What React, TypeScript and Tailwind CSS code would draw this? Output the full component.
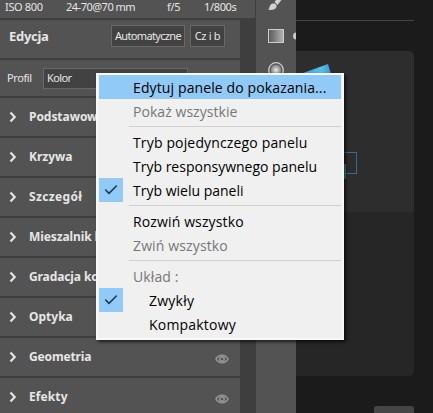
import { Check } from "lucide-react";
import clsx from "clsx";

const SECTIONS = [
  { label: "Podstawowe", spacing: "tracking-[-0.05px]" },
  { label: "Krzywa", spacing: "tracking-[0px]" },
  { label: "Szczegół", spacing: "tracking-[0.35px]" },
  { label: "Mieszalnik kolorów", spacing: "tracking-[-0.1px]" },
  { label: "Gradacja kolorów", spacing: "tracking-[-0.1px]" },
  { label: "Optyka", spacing: "tracking-[0px]" },
  { label: "Geometria", spacing: "tracking-[-0.15px]" },
  { label: "Efekty", spacing: "tracking-[0.1px]" },
];

interface MenuEntry {
  label: string;
  spacing?: string;
  active?: boolean;
  disabled?: boolean;
  checked?: boolean;
  indent?: boolean;
}

const MENU_GROUPS: MenuEntry[][] = [
  [
    { label: "Edytuj panele do pokazania...", active: true, spacing: "tracking-[0.12px]" },
    { label: "Pokaż wszystkie", disabled: true, spacing: "tracking-[0.05px]" },
  ],
  [
    { label: "Tryb pojedynczego panelu", spacing: "tracking-[0.15px]" },
    { label: "Tryb responsywnego panelu" },
    { label: "Tryb wielu paneli", checked: true },
  ],
  [
    { label: "Rozwiń wszystko", spacing: "tracking-[0.13px]" },
    { label: "Zwiń wszystko", disabled: true, spacing: "tracking-[0.13px]" },
  ],
  [
    { label: "Układ :", disabled: true, spacing: "tracking-[0.1px]" },
    { label: "Zwykły", checked: true, indent: true, spacing: "tracking-[0.25px]" },
    { label: "Kompaktowy", indent: true, spacing: "tracking-[0.2px]" },
  ],
];

function EyeIcon() {
  return (
    <svg width="14" height="10" viewBox="0 0 14 10" fill="none">
      <path d="M1 5C3.8.2 10.2.2 13 5 10.2 9.8 3.8 9.8 1 5Z" stroke="#929292" strokeWidth="1.6" />
      <circle cx="7" cy="5" r="2.2" stroke="#929292" strokeWidth="1.7" />
    </svg>
  );
}

function Sidebar() {
  return (
    <div className="flex w-64 shrink-0 flex-col bg-[#3e3e3e] text-[#e6e6e6]">
      <div className="flex h-[18px] w-[255px] shrink-0 bg-[#535353] pl-[5px] text-[11px] leading-[15px] tracking-[-0.35px] whitespace-nowrap">
        <span className="w-[61px] -translate-y-px">ISO 800</span>
        <span className="w-[101px] -translate-y-px tracking-[-0.5px]">24-70@70 mm</span>
        <span className="w-[37px] -translate-y-px">f/5</span>
        <span className="-translate-y-px">1/800s</span>
      </div>
      <div className="mt-0.5 flex h-[38px] w-60 shrink-0 items-start bg-[#535353] pl-[9px]">
        <span className="mt-[7px] w-[102px] text-[13px] leading-[18px] font-bold tracking-[-0.3px]">Edycja</span>
        <span className="mt-[5px] flex h-[22px] w-[74px] items-center justify-center border border-[#686868] bg-[#424242] text-[11px] tracking-[-0.65px]">
          Automatyczne
        </span>
        <span className="mt-[5px] ml-[5px] flex h-[22px] w-[35px] items-center justify-center border border-[#686868] bg-[#424242] text-[11px] tracking-[-0.3px]">
          Cz i b
        </span>
      </div>
      <div className="mt-0.5 flex h-9 w-60 shrink-0 items-start bg-[#535353] pl-[7px] text-[11px]">
        <span className="mt-[9px] w-9 leading-[18px] tracking-[-0.4px]">Profil</span>
        <span className="mt-2 flex h-[21px] w-[145px] items-center border border-[#686868] bg-[#424242] pl-[3px] tracking-[-0.6px]">
          Kolor
        </span>
      </div>
      {SECTIONS.map((s) => (
        <div key={s.label} className="mt-0.5 flex h-[38px] w-60 shrink-0 items-center bg-[#535353] pl-[9px]">
          <svg width="8" height="12" viewBox="0 0 8 12" fill="none">
            <path d="m1.5 1.5 4.2 4.5-4.2 4.5" stroke="#e2e2e2" strokeWidth="2.2" />
          </svg>
          <span className={clsx("ml-3 flex-1 text-[12px] font-bold whitespace-nowrap", s.spacing)}>{s.label}</span>
          <span className="mt-1 mr-[11px] flex">
            <EyeIcon />
          </span>
        </div>
      ))}
    </div>
  );
}

function Toolbar() {
  return (
    <div className="w-10 shrink-0 bg-[#535353]">
      <svg width="40" height="90" viewBox="0 0 40 90">
        <defs>
          <linearGradient id="fade">
            <stop stopColor="#585858" />
            <stop offset="1" stopColor="#b5b5b5" />
          </linearGradient>
          <radialGradient id="glow">
            <stop stopColor="#ededed" />
            <stop offset="1" stopColor="#777" />
          </radialGradient>
        </defs>
        <path d="M18.5 2 23-4l4 2-5.5 7Z" fill="#d2d2d2" />
        <path d="M17 3.5c3 0 4.5 2 3 4.5-1.500 2-5 2.500-8 1.500 2-1 1-5.500 5-6Z" fill="#d2d2d2" />
        <rect x="12.5" y="29.5" width="15" height="13" fill="url(#fade)" stroke="#cecece" />
        <path d="M40 32.5a3 3.5 0 0 0 0 7Z" fill="#c9c9c9" />
        <circle cx="20" cy="70" r="7.3" fill="#555" stroke="#cecece" strokeWidth="1.3" />
        <circle cx="20" cy="70" r="5.5" fill="url(#glow)" />
      </svg>
    </div>
  );
}

function Workspace() {
  return (
    <div className="flex flex-1 flex-col bg-[#1b1b1b]">
      <div className="mt-5 h-px w-[118px] shrink-0 bg-[#444]" />
      <div className="mt-[30px] h-[325px] w-[118px] shrink-0 overflow-hidden rounded-r-[5px] bg-[#262626]">
        <div className="h-[161px] bg-[#2d2d2d]">
          <svg width="118" height="161" viewBox="0 0 118 161">
            <defs>
              <linearGradient id="sky">
                <stop stopColor="#4699db" />
                <stop offset=".65" stopColor="#55c2dd" />
                <stop offset="1" stopColor="#438de0" />
              </linearGradient>
            </defs>
            <path d="m7 22 25-9 3 10H7Z" fill="url(#sky)" />
            <rect x="30.5" y="101.5" width="30" height="21" fill="none" stroke="#356b96" />
            <path d="M48 113h2v15h-2Z" fill="#439478" />
          </svg>
        </div>
      </div>
      <div className="mt-[30px] ml-[78px] h-3 w-10 rounded-t-[3px] bg-[#454545]" />
    </div>
  );
}

function ContextMenu() {
  return (
    <div className="absolute top-[73px] left-24 h-[267px] w-[248px] border-2 border-[#f8f8f8] bg-[#f0f0f0] pr-px pl-px font-['Open_Sans',sans-serif] text-[14px] text-black shadow-[2px_2px_3px_rgba(0,0,0,0.65)]">
      {MENU_GROUPS.map((group, i) => (
        <div key={i}>
          {i > 0 && <div className="mb-[3px] ml-[30px] border-t border-[#d0d0d0]" />}
          <div className={clsx(i < MENU_GROUPS.length - 1 && "pb-[3px]")}>
            {group.map((item) => (
              <div
                key={item.label}
                className={clsx(
                  "flex h-6 items-center whitespace-nowrap",
                  item.active && "bg-[#91c9f7]",
                  item.disabled && "text-[#777]",
                )}
              >
                <span className={clsx("flex size-6 items-center justify-center", item.checked && "bg-[#91c9f7]")}>
                  {item.checked && <Check size={16} strokeWidth={2.4} color="#1c3b54" />}
                </span>
                <span className={clsx(item.indent ? "ml-[26px]" : "ml-2.5", item.spacing)}>{item.label}</span>
              </div>
            ))}
          </div>
        </div>
      ))}
    </div>
  );
}

export default function App() {
  return (
    <div className="relative flex h-[413px] w-[433px] overflow-hidden bg-[#1b1b1b] font-['Noto_Sans',sans-serif]">
      <Sidebar />
      <Toolbar />
      <Workspace />
      <ContextMenu />
    </div>
  );
}
